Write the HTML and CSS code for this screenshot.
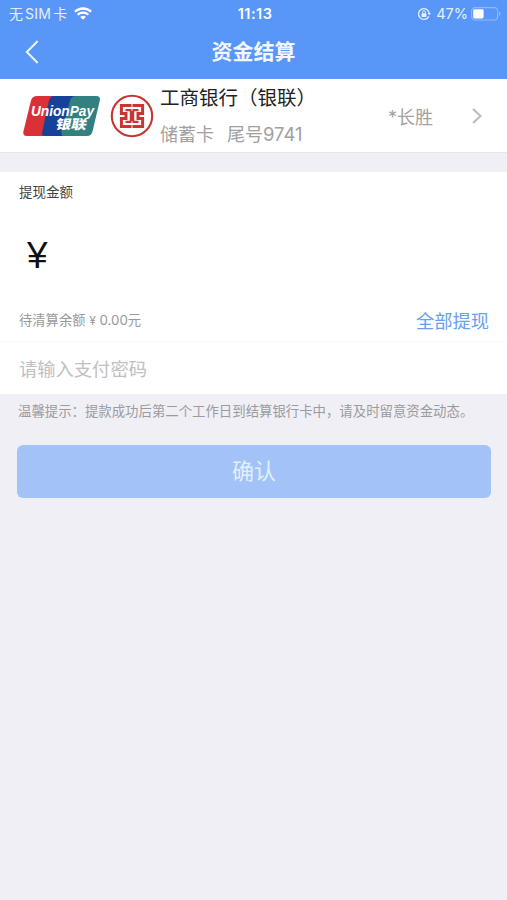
FILE: index.html
```html
<!DOCTYPE html>
<html lang="zh-CN">
<head>
<meta charset="utf-8">
<meta name="viewport" content="width=device-width, initial-scale=1">
<title>资金结算</title>
<link rel="stylesheet" href="styles.css">
</head>
<body>
<header class="header">
  <div class="status">
    <div class="status-left">
      <span class="carrier">无<span class="sim">SIM</span>卡</span>
      <svg class="wifi" viewBox="0 0 18 13" width="18" height="13" fill="none" stroke="#fff" stroke-width="2.3">
        <path d="M.9 4.8a11.6 11.6 0 0 1 16.2 0M3.7 7.8a7.6 7.6 0 0 1 10.6 0"/>
        <path d="M9 12.8L6.2 10a4 4 0 0 1 5.6 0z" fill="#fff" stroke="none"/>
      </svg>
    </div>
    <span class="time">11:13</span>
    <div class="status-right">
      <svg viewBox="0 0 14 14" width="14" height="14" fill="none" stroke="#e4efff" stroke-width="1.3">
        <path d="M11.8 9.4A5.4 5.4 0 1 1 12.3 6.4"/>
        <path d="M10.6 6.1h3.3l-1.6 2.2z" fill="#e4efff" stroke="none"/>
        <rect x="4.6" y="6.2" width="4.8" height="3.8" rx=".6" fill="#e4efff" stroke="none"/>
        <path d="M5.6 6.6V5.2a1.4 1.4 0 0 1 2.8 0v1.4" stroke-width="1"/>
      </svg>
      <span class="percent">47%</span>
      <svg viewBox="0 0 30 14" width="30" height="14">
        <rect x=".6" y=".6" width="26" height="12.4" rx="3.4" fill="none" stroke="#8fbafa" stroke-width="1.1"/>
        <rect x="2.2" y="2.2" width="10.4" height="9.2" rx="1.4" fill="#fff"/>
        <path d="M28 4.6q1.6.6 1.6 2.2T28 9z" fill="#8fbafa"/>
      </svg>
    </div>
  </div>
  <nav class="nav">
    <svg class="back" viewBox="0 0 14 24" width="14" height="24" fill="none" stroke="#eef6ff" stroke-width="2"><path d="M12.7 1L1.8 12l10.9 11"/></svg>
    <h1 class="title">资金结算</h1>
  </nav>
</header>

<main>
  <section class="bank">
    <svg class="unionpay" viewBox="0 0 80 42" width="80" height="42">
      <path d="M15 1H32L24 41H5Q.5 41 1.4 36.5L9 5.5Q10.2 1 15 1z" fill="#dc3038"/>
      <path d="M32 1H55L43 41H23Q19 41 20.3 36.5L27 5.5Q28.2 1 32 1z" fill="#16429a"/>
      <path d="M54 1H74Q79 1 77.8 5.5L70.5 36.5Q69.2 41 65 41H42Q38.5 41 39.5 36.5L48 5.5Q49.2 1 54 1z" fill="#32807f"/>
      <text class="up-latin" x="9" y="21" textLength="63" lengthAdjust="spacingAndGlyphs">UnionPay</text>
      <text class="up-cjk" transform="translate(33 33.5) skewX(-12)" textLength="31" lengthAdjust="spacingAndGlyphs">银联</text>
    </svg>
    <svg class="icbc" viewBox="0 0 44 44" width="44" height="44" fill="none" stroke="#c93632">
      <circle cx="22" cy="22" r="20.2" stroke-width="2.1"/>
      <path d="M11.4 11.4H32.6V19.4H28V24.6H32.6V32.6H11.4V24.6H16V19.4H11.4z" stroke-width="3"/>
      <path d="M15.5 16.2H28.5M15.5 27.8H28.5" stroke-width="2.2"/>
      <path d="M22 16V28" stroke-width="4.4"/>
      <path d="M22 9.5V17M22 27V34.5" stroke="#fff" stroke-width=".9"/>
    </svg>
    <div class="bank-text">
      <div class="bank-name">工商银行（银联）</div>
      <div class="bank-card"><span>储蓄卡</span><span>尾号<span class="digits">9741</span></span></div>
    </div>
    <span class="owner">*长胜</span>
    <svg class="chevron" viewBox="0 0 10 16" width="10" height="16" fill="none" stroke="#b8b8bc" stroke-width="1.8"><path d="M1 1l7.6 7L1 15"/></svg>
  </section>

  <section class="amount">
    <div class="label">提现金额</div>
    <div class="yen">¥</div>
    <div class="balance-row">
      <span class="balance">待清算余额<span class="small-yen">¥</span>0.00元</span>
      <a class="all">全部提现</a>
    </div>
  </section>
  <section class="password">请输入支付密码</section>
  <p class="tip">温馨提示：提款成功后第二个工作日到结算银行卡中，请及时留意资金动态。</p>
  <button class="confirm" type="button">确认</button>
</main>
</body>
</html>
```
FILE: styles.css
```css
* { box-sizing: border-box; }
body {
  margin: 0;
  min-height: 900px;
  background: #f0eff5;
  font-family: Inter, "Noto Sans CJK SC", sans-serif;
}
svg { display: block; flex: none; }
.header { height: 79px; background: #5896f8; color: #fff; }
.status {
  display: grid;
  grid-template-columns: 1fr auto 1fr;
  align-items: center;
  height: 27px;
  padding: 0 6px 0 9px;
  font-size: 14px;
  line-height: 20px;
}
.status-left, .status-right { display: flex; align-items: center; }
.status-left { gap: 7px; color: #e4efff; }
.sim { margin: 0 2px; letter-spacing: .3px; }
.carrier { white-space: nowrap; }
.status-right { justify-content: flex-end; color: #e4efff; }
.percent { margin: 0 3px 0 5px; font-size: 14.5px; }
.time { font-weight: 600; font-size: 14.5px; letter-spacing: .5px; }
.nav {
  display: grid;
  grid-template-columns: 1fr auto 1fr;
  align-items: center;
  height: 50px;
  padding: 0 25px;
}
.title { margin: 0; font-size: 21px; line-height: 32px; font-weight: 700; color: #f2f8ff; }

.bank {
  display: flex;
  align-items: center;
  height: 74px;
  padding: 0 25px 0 22px;
  background: #fff;
  border-bottom: 1px solid #e6e6e9;
}
.icbc { margin-left: 8px; }
.up-latin { font: italic 700 14.5px "Liberation Sans", sans-serif; fill: #fff; }
.up-cjk { font: 800 13px "Noto Sans CJK SC", sans-serif; fill: #fff; }
.bank-text { margin-left: 6px; flex: 1; white-space: nowrap; }
.bank-name { font-size: 19.5px; line-height: 37px; color: #222; }
.bank-card { display: flex; gap: 13px; font-size: 18px; line-height: 35px; color: #a0a0a0; }
.digits { font-size: 18.4px; }
.owner { font-size: 18px; color: #a2a2a2; }
.chevron { margin-left: 39px; }

.amount { margin-top: 19px; height: 170px; padding: 8px 18px 0 19px; background: #fff; border-bottom: 1px solid #fafafa; }
.label { font-size: 13.5px; line-height: 24px; color: #444; }
.yen { margin: 26px 0 0 8px; font: 37px/52px "Liberation Sans", sans-serif; color: #111; }
.balance-row { display: flex; align-items: center; justify-content: space-between; margin-top: 22px; height: 31px; }
.balance { font-size: 13.3px; color: #999; }
.small-yen { display: inline-block; width: 14px; font-size: 12px; text-align: center; }
.all { font-size: 18.3px; color: #6a9eee; }
.password { height: 52px; padding-left: 19px; background: #fff; font-size: 18.3px; line-height: 55px; color: #c0c0c3; }
.tip { margin: 0; padding-left: 18px; height: 51px; font-size: 13.4px; line-height: 35px; color: #9b9b9f; white-space: nowrap; }
.confirm {
  display: block;
  width: 474px;
  height: 53px;
  margin: 0 0 0 17px;
  padding: 0;
  border: 0;
  border-radius: 6px;
  background: #a3c3f8;
  color: #e0f0ff;
  font: 22px/53px Inter, "Noto Sans CJK SC", sans-serif;
}
```
